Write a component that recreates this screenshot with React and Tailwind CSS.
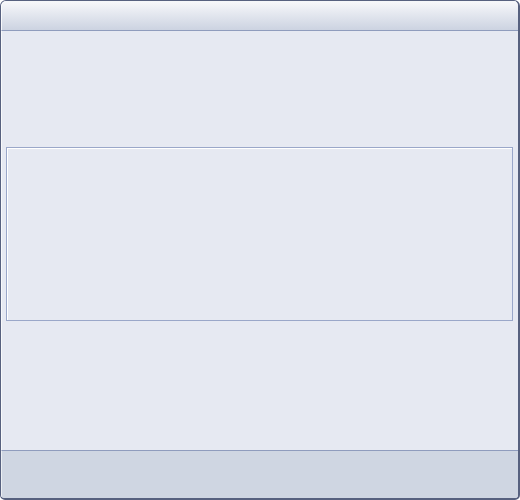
import React from "react";

const App = () => {
    return (
        <div className="w-[520px] h-[500px] bg-white">
            <div className="flex flex-col w-full h-full border-l border-t border-r-2 border-b-2 border-[#57617f] rounded-t-[6px] rounded-b-[5px] overflow-hidden bg-[#e6e9f2]">
                {/* header */}
                <div className="h-[30px] shrink-0 border-l border-t border-white/80 rounded-tl-[5px] bg-gradient-to-b from-[#f6f7fa] to-[#ccd3e1] border-b border-b-[#8f9cbd]" />

                {/* body */}
                <div className="flex-1 flex flex-col pl-[4px] pr-[5px] pt-[116px] border-l border-white/70">
                    <div className="h-[174px] border border-[#9aa7c9]">
                        <div className="h-full border-l border-t border-white" />
                    </div>
                </div>

                {/* footer */}
                <div className="h-[48px] shrink-0 border-t border-[#8f9cbd] bg-[#cfd6e2] border-l border-l-white/60" />
            </div>
        </div>
    );
};

export default App;
